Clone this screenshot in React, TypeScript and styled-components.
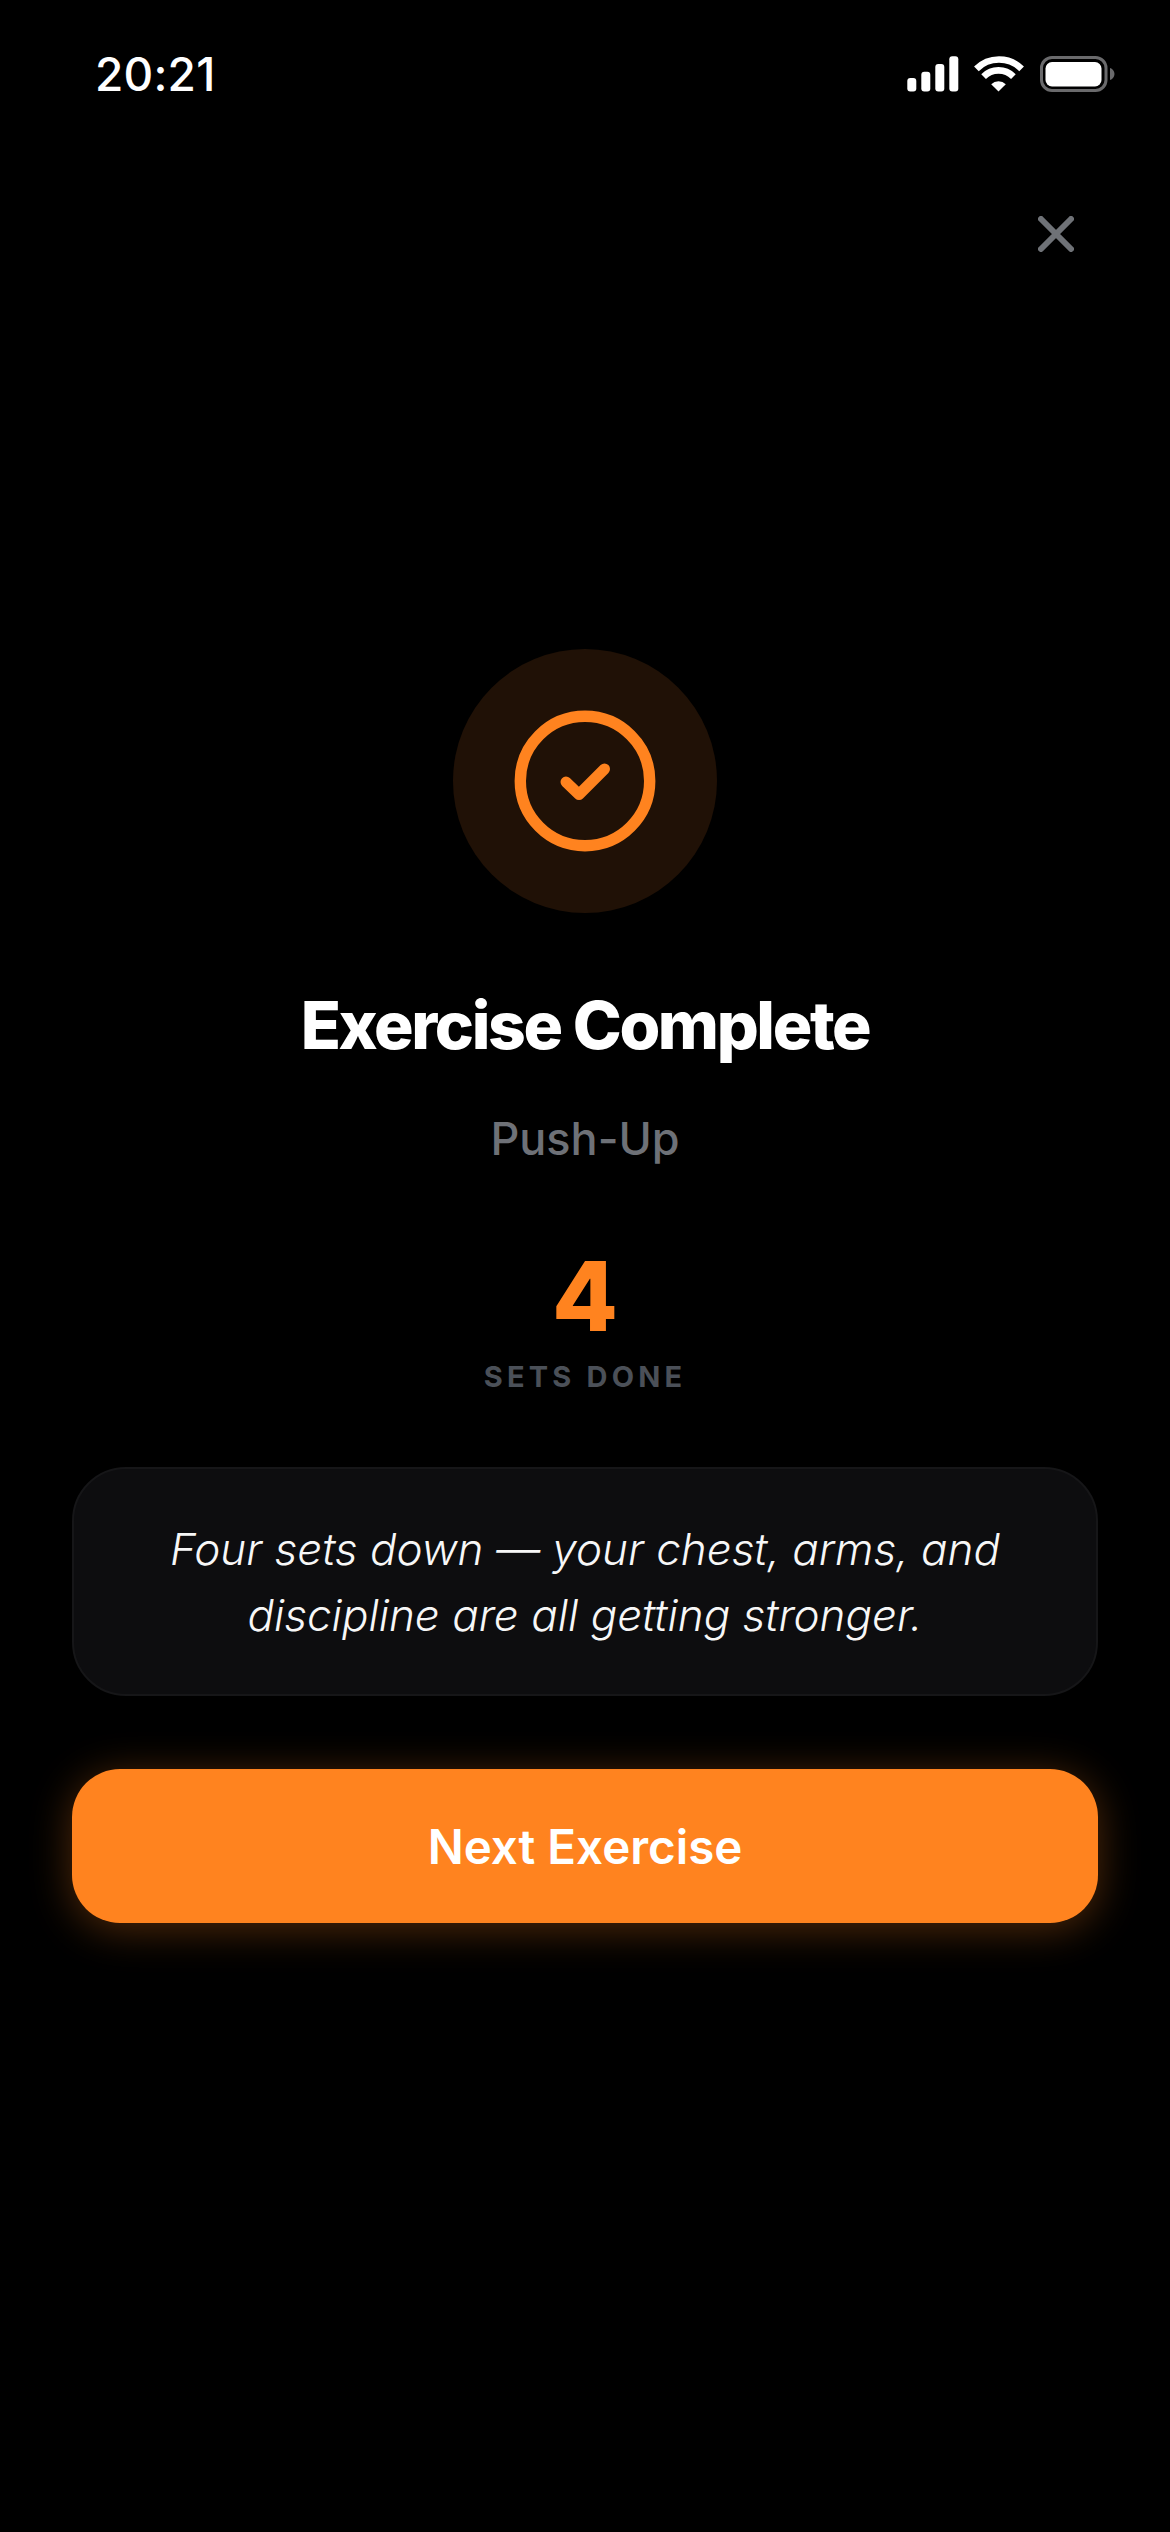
import styled, { createGlobalStyle } from 'styled-components';

const ORANGE = '#ff831f';

const GlobalStyle = createGlobalStyle`
  html, body {
    margin: 0;
    padding: 0;
    background: #000;
  }
  * {
    box-sizing: border-box;
  }
`;

const App = () => {
  return (
    <Screen>
      <GlobalStyle />
      <StatusBar>
        <Time>20:21</Time>
        <StatusIcons>
          <svg width="52" height="36" viewBox="0 0 52 36" fill="#fff">
            <rect x="0.3" y="22" width="9" height="13.5" rx="3" />
            <rect x="14.3" y="15.7" width="9" height="19.8" rx="3" />
            <rect x="28.3" y="8" width="9" height="27.5" rx="3" />
            <rect x="42.3" y="0.3" width="9" height="35.2" rx="3" />
          </svg>
          <svg width="50" height="36" viewBox="0 0 50 36" fill="none">
            <path d="M2.4 12.9 A32 32 0 0 1 47.6 12.9" stroke="#fff" strokeWidth="6.6" />
            <path d="M9.6 20.6 A21 21 0 0 1 39.4 20.6" stroke="#fff" strokeWidth="6.6" />
            <path d="M17.2 28.2 A10.3 10.3 0 0 1 31.8 28.2 L24.5 35.5 Z" fill="#fff" />
          </svg>
          <svg width="76" height="36" viewBox="0 0 76 36" fill="none">
            <rect x="2.5" y="1.5" width="64.5" height="33" rx="10.5" stroke="#6a6a6c" strokeWidth="3" />
            <rect x="6.5" y="6" width="56" height="24.5" rx="6.5" fill="#fff" />
            <path d="M71 12 C73.5 12.8 75.5 15 75.5 18 C75.5 21 73.5 23.2 71 24 Z" fill="#6a6a6c" />
          </svg>
        </StatusIcons>
      </StatusBar>

      <CloseRow>
        <CloseButton aria-label="close">
          <svg width="36" height="36" viewBox="0 0 36 36" fill="none" stroke="#6f7277" strokeWidth="6" strokeLinecap="round">
            <path d="M3 3 L33 33 M33 3 L3 33" />
          </svg>
        </CloseButton>
      </CloseRow>

      <Content>
        <Badge>
          <svg width="144" height="144" viewBox="0 0 144 144" fill="none" stroke={ORANGE} strokeWidth="11.4" strokeLinecap="round" strokeLinejoin="round">
            <circle cx="72" cy="72" r="64.7" />
            <path d="M53 73 L66 85.5 L91.5 60" strokeWidth="11" />
          </svg>
        </Badge>
        <Title>Exercise Complete</Title>
        <ExerciseName>Push-Up</ExerciseName>
        <SetCount>4</SetCount>
        <SetLabel>SETS DONE</SetLabel>
        <QuoteCard>
          <Quote>
            Four sets down — your chest, arms, and
            <br />
            discipline are all getting stronger.
          </Quote>
        </QuoteCard>
        <NextButton>Next Exercise</NextButton>
      </Content>
    </Screen>
  );
};
export default App;

const Screen = styled.div`
  width: 100%;
  min-height: 2532px;
  background: #000;
  color: #fff;
  font-family: Inter, 'Liberation Sans', sans-serif;
  display: flex;
  flex-direction: column;
`;

const StatusBar = styled.div`
  height: 148px;
  display: flex;
  justify-content: space-between;
  align-items: center;
  padding: 0 55px 0 95px;
`;

const Time = styled.span`
  font-size: 46px;
  font-weight: 500;
  line-height: 56px;
  letter-spacing: 0.2px;
`;

const StatusIcons = styled.div`
  display: flex;
  align-items: center;
  gap: 15px;
  svg {
    display: block;
  }
`;

const CloseRow = styled.div`
  display: flex;
  justify-content: flex-end;
  padding: 68px 96px 0 0;
`;

const CloseButton = styled.button`
  width: 36px;
  height: 36px;
  padding: 0;
  border: none;
  background: none;
  svg {
    display: block;
  }
`;

const Content = styled.div`
  display: flex;
  flex-direction: column;
  align-items: center;
  padding: 397px 72px 0;
`;

const Badge = styled.div`
  width: 264px;
  height: 264px;
  border-radius: 50%;
  background: #201106;
  display: flex;
  align-items: center;
  justify-content: center;
  svg {
    display: block;
  }
`;

const Title = styled.h1`
  margin: 74px 0 0;
  font-size: 66px;
  font-weight: 800;
  line-height: 76px;
  letter-spacing: -2.4px;
  color: #fff;
`;

const ExerciseName = styled.div`
  margin-top: 49px;
  font-size: 45px;
  font-weight: 500;
  line-height: 54px;
  color: #6e7177;
`;

const SetCount = styled.div`
  margin-top: 80px;
  font-size: 96px;
  font-weight: 800;
  line-height: 100px;
  color: ${ORANGE};
`;

const SetLabel = styled.div`
  margin-top: 13px;
  font-size: 29px;
  font-weight: 700;
  line-height: 36px;
  letter-spacing: 4.2px;
  color: #4b5058;
`;

const QuoteCard = styled.div`
  width: 100%;
  height: 229px;
  margin-top: 72px;
  border: 2px solid #161618;
  border-radius: 54px;
  background: #0d0d0f;
  display: flex;
  align-items: center;
  justify-content: center;
`;

const Quote = styled.p`
  margin: 0;
  font-size: 44px;
  font-style: italic;
  font-weight: 350;
  line-height: 66px;
  text-align: center;
  color: #f7f7f7;
`;

const NextButton = styled.button`
  width: 100%;
  height: 154px;
  margin-top: 73px;
  border: none;
  border-radius: 48px;
  background: ${ORANGE};
  box-shadow: 0 6px 42px rgba(255, 131, 31, 0.32);
  color: #fff;
  font-family: inherit;
  font-size: 47.5px;
  font-weight: 600;
`;
